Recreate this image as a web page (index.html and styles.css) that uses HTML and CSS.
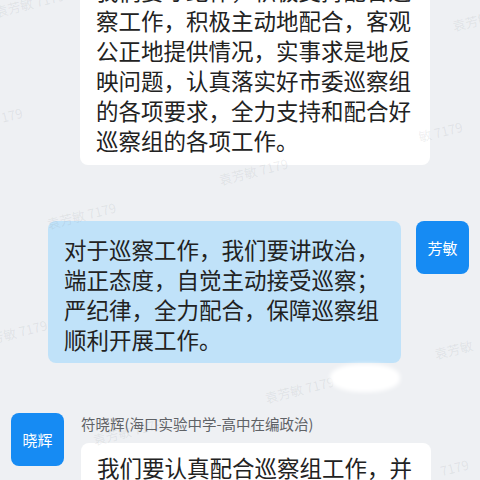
FILE: index.html
```html
<!DOCTYPE html>
<html lang="zh-CN">
<head>
    <meta charset="UTF-8">
    <meta name="viewport" content="width=device-width, initial-scale=1.0">
    <title>聊天记录</title>
    <link rel="stylesheet" href="styles.css">
</head>
<body>
    <div class="chat">
        <div class="row row-left row-first">
            <div class="avatar-space"></div>
            <div class="bubble bubble-white">我们要守纪律，积极支持配合巡察工作，积极主动地配合，客观公正地提供情况，实事求是地反映问题，认真落实好市委巡察组的各项要求，全力支持和配合好巡察组的各项工作。</div>
        </div>

        <div class="row row-right">
            <div class="bubble bubble-blue">对于巡察工作，我们要讲政治，端正态度，自觉主动接受巡察；严纪律，全力配合，保障巡察组顺利开展工作。</div>
            <div class="avatar">芳敏</div>
        </div>

        <div class="row row-left">
            <div class="avatar">晓辉</div>
            <div class="msg">
                <div class="name">符晓辉(海口实验中学-高中在编政治)</div>
                <div class="bubble bubble-white">我们要认真配合巡察组工作，并积极主动地反映情况。</div>
            </div>
        </div>
    </div>

    <!-- 水印 -->
    <div class="mark" style="left:-6px; top:-6px;">袁芳敏 7179</div>
    <div class="mark" style="left:452px; top:12px;">袁芳敏</div>
    <div class="mark" style="left:-22px; top:108px;">敏 7179</div>
    <div class="mark" style="left:418px; top:122px;">敏 7179</div>
    <div class="mark" style="left:218px; top:162px;">袁芳敏 7179</div>
    <div class="mark" style="left:46px; top:206px;">袁芳敏 7179</div>
    <div class="mark" style="left:-10px; top:322px;">芳敏 7179</div>
    <div class="mark" style="left:434px; top:340px;">袁芳敏</div>
    <div class="mark" style="left:264px; top:380px;">袁芳敏 7179</div>
    <div class="mark" style="left:92px; top:422px;">袁芳敏 7179</div>
    <div class="mark" style="left:440px; top:458px;">7179</div>
    <div class="blob"></div>
</body>
</html>
```

FILE: styles.css
```css
body {
    margin: 0;
    width: 480px;
    height: 480px;
    overflow: hidden;
    position: relative;
    background-color: #eef0f3;
    font-family: "Noto Sans CJK SC", "Noto Sans", sans-serif;
    color: #222;
}

.chat {
    display: flex;
    flex-direction: column;
}

.row {
    display: flex;
    align-items: flex-start;
}

.row-left {
    padding-left: 11px;
    gap: 17px;
}

.row-first {
    margin-top: -33px;
}

.row-right {
    justify-content: flex-end;
    padding-right: 11px;
    gap: 15px;
    margin-top: 56px;
}

.row-right + .row-left {
    margin-top: 50px;
}

.avatar-space {
    width: 52px;
    flex-shrink: 0;
}

.avatar {
    width: 53px;
    height: 53px;
    flex-shrink: 0;
    border-radius: 8px;
    background-color: #168bf3;
    color: #fff;
    font-size: 15px;
    display: flex;
    align-items: center;
    justify-content: center;
}

.bubble {
    font-size: 22.5px;
    line-height: 30px;
    border-radius: 8px;
    box-sizing: border-box;
}

.bubble-white {
    width: 350px;
    background-color: #fff;
    padding: 8px 16px 10px 16px;
}

.bubble-blue {
    width: 353px;
    background-color: #c0e2f9;
    padding: 13px 16px 9px 16px;
}

.msg {
    display: flex;
    flex-direction: column;
}

.name {
    font-size: 14.5px;
    line-height: 20px;
    color: #5f6266;
    margin-top: 1px;
    margin-bottom: 9px;
}

.msg .bubble-white {
    padding-top: 9px;
}

.mark {
    position: absolute;
    font-size: 13px;
    color: rgba(120, 125, 135, 0.12);
    transform: rotate(-14deg);
    white-space: nowrap;
    pointer-events: none;
}

.blob {
    position: absolute;
    left: 330px;
    top: 364px;
    width: 70px;
    height: 28px;
    border-radius: 45%;
    background-color: #fff;
    filter: blur(2px);
}
```
